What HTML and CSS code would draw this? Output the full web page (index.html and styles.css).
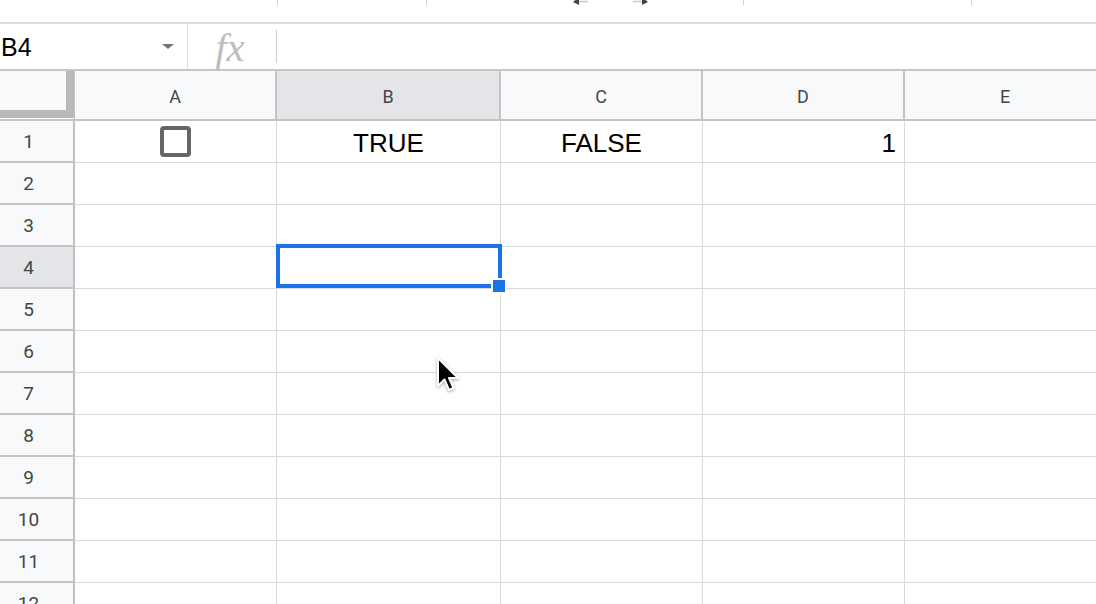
FILE: index.html
```html
<!DOCTYPE html>
<html lang="en">
<head>
    <meta charset="UTF-8">
    <title>Sheet</title>
    <link rel="stylesheet" href="styles.css">
</head>
<body>
    <!-- Toolbar (cut off at the top) -->
    <div class="toolbar">
        <span class="tb-sep sep-1"></span>
        <span class="tb-sep sep-2"></span>
        <svg class="tb-arrow arrow-left" width="16" height="6" viewBox="0 0 16 6">
            <path d="M0 2 L6 -3 L6 5 Z" fill="#444746"/>
            <path d="M6 1.5 H15" stroke="#c8c8c8" stroke-width="1.5"/>
        </svg>
        <svg class="tb-arrow arrow-right" width="16" height="6" viewBox="0 0 16 6">
            <path d="M16 2 L10 -3 L10 5 Z" fill="#444746"/>
            <path d="M1 1.5 H10" stroke="#c8c8c8" stroke-width="1.5"/>
        </svg>
        <span class="tb-sep sep-3"></span>
        <span class="tb-sep sep-4"></span>
    </div>

    <!-- Name box + formula bar -->
    <div class="formula-bar">
        <div class="name-box">
            <span class="name">B4</span>
            <span class="caret"></span>
        </div>
        <div class="fx">fx</div>
        <span class="fx-sep"></span>
        <div class="formula-input"></div>
    </div>

    <!-- Grid -->
    <div class="sheet">
        <div class="corner"><div class="freeze"></div></div>
        <div class="hdr">A</div>
        <div class="hdr active">B</div>
        <div class="hdr">C</div>
        <div class="hdr">D</div>
        <div class="hdr">E</div>

        <div class="rh">1</div>
        <div class="cell center"><span class="checkbox"></span></div>
        <div class="cell center text">TRUE</div>
        <div class="cell center text">FALSE</div>
        <div class="cell right text">1</div>
        <div class="cell"></div>

        <div class="rh">2</div>
        <div class="cell"></div><div class="cell"></div><div class="cell"></div><div class="cell"></div><div class="cell"></div>

        <div class="rh">3</div>
        <div class="cell"></div><div class="cell"></div><div class="cell"></div><div class="cell"></div><div class="cell"></div>

        <div class="rh active">4</div>
        <div class="cell"></div>
        <div class="cell selected">
            <div class="selection"><span class="handle"></span></div>
        </div>
        <div class="cell"></div><div class="cell"></div><div class="cell"></div>

        <div class="rh">5</div>
        <div class="cell"></div><div class="cell"></div><div class="cell"></div><div class="cell"></div><div class="cell"></div>

        <div class="rh">6</div>
        <div class="cell"></div><div class="cell"></div><div class="cell"></div><div class="cell"></div><div class="cell"></div>

        <div class="rh">7</div>
        <div class="cell"></div><div class="cell"></div><div class="cell"></div><div class="cell"></div><div class="cell"></div>

        <div class="rh">8</div>
        <div class="cell"></div><div class="cell"></div><div class="cell"></div><div class="cell"></div><div class="cell"></div>

        <div class="rh">9</div>
        <div class="cell"></div><div class="cell"></div><div class="cell"></div><div class="cell"></div><div class="cell"></div>

        <div class="rh">10</div>
        <div class="cell"></div><div class="cell"></div><div class="cell"></div><div class="cell"></div><div class="cell"></div>

        <div class="rh">11</div>
        <div class="cell"></div><div class="cell"></div><div class="cell"></div><div class="cell"></div><div class="cell"></div>

        <div class="rh">12</div>
        <div class="cell"></div><div class="cell"></div><div class="cell"></div><div class="cell"></div><div class="cell"></div>
    </div>

    <!-- Mouse pointer -->
    <svg class="pointer" width="26" height="40" viewBox="0 0 26 40">
        <path d="M2 2 L2 30 L8.5 23.5 L13 34 L17.5 32 L13 22 L22 22 Z"
              fill="#000" stroke="#fff" stroke-width="2" stroke-linejoin="round"/>
    </svg>
</body>
</html>
```

FILE: styles.css
```css
body {
    margin: 0;
    width: 1096px;
    height: 604px;
    overflow: hidden;
    position: relative;
    background: #fff;
    font-family: Arial, "Liberation Sans", sans-serif;
}

/* toolbar */
.toolbar {
    display: flex;
    align-items: flex-start;
    height: 22px;
    border-bottom: 2px solid #dadce0;
}

.tb-sep {
    width: 1px;
    height: 5px;
    background: #d0d0d0;
}

.sep-1 { margin-left: 277px; }
.sep-2 { margin-left: 148px; }
.arrow-left { margin-left: 146px; }
.arrow-right { margin-left: 43px; }
.sep-3 { margin-left: 95px; }
.sep-4 { margin-left: 227px; }

/* formula bar */
.formula-bar {
    display: flex;
    height: 45px;
    border-bottom: 2px solid #c4c7c5;
}

.name-box {
    width: 188px;
    display: flex;
    align-items: center;
    justify-content: space-between;
    padding: 0 13px 0 1px;
    box-sizing: border-box;
    border-right: 1px solid #e0e0e0;
}

.name {
    font-size: 25px;
    color: #000;
    margin-top: 1px;
}

.caret {
    width: 0;
    height: 0;
    border-left: 6px solid transparent;
    border-right: 6px solid transparent;
    border-top: 5px solid #757575;
}

.fx {
    width: 88px;
    display: flex;
    align-items: center;
    justify-content: center;
    font-family: "Liberation Serif", serif;
    font-style: italic;
    font-size: 41px;
    color: #bdbdbd;
    padding-right: 4px;
    box-sizing: border-box;
}

.fx-sep {
    width: 1px;
    height: 33px;
    align-self: center;
    background: #cccccc;
}

.formula-input {
    flex: 1;
}

/* grid */
.sheet {
    display: grid;
    grid-template-columns: 75px 202px 224px 202px 202px 202px;
    grid-template-rows: 50px;
    grid-auto-rows: 42px;
    width: 1107px;
}

.sheet > div {
    box-sizing: border-box;
}

.corner {
    background: #f8f9fa;
    border-right: 1px solid #c0c0c0;
    border-bottom: 2px solid #c4c4c4;
}

.freeze {
    width: 74px;
    height: 47px;
    box-sizing: border-box;
    border-right: 8px solid #b9b9b9;
    border-bottom: 8px solid #b9b9b9;
}

.hdr {
    background: #f8f9fa;
    border-right: 2px solid #c4c4c4;
    border-bottom: 2px solid #c4c4c4;
    display: flex;
    align-items: center;
    justify-content: center;
    font-family: Roboto, "Liberation Sans", sans-serif;
    font-size: 18px;
    color: #444746;
    padding-top: 3px;
}

.rh {
    background: #f8f9fa;
    border-right: 2px solid #c0c0c0;
    border-bottom: 2px solid #c4c4c4;
    display: flex;
    align-items: center;
    justify-content: center;
    padding-right: 16px;
    padding-top: 1px;
    font-family: Roboto, "Liberation Sans", sans-serif;
    font-size: 19px;
    color: #444746;
}

.hdr.active,
.rh.active {
    background: #e3e5e8;
}

.cell {
    border-right: 1px solid #d9d9d9;
    border-bottom: 1px solid #d9d9d9;
    display: flex;
    align-items: center;
    font-size: 26px;
    color: #000;
}

.cell.text {
    padding-top: 3px;
}

.cell.center {
    justify-content: center;
}

.cell.right {
    justify-content: flex-end;
    padding-right: 8px;
}

.checkbox {
    width: 31px;
    height: 31px;
    box-sizing: border-box;
    border: 4px solid #666;
    border-radius: 4px;
}

.cell.selected {
    position: relative;
}

.selection {
    position: absolute;
    left: -1px;
    top: -3px;
    width: 226px;
    height: 44px;
    box-sizing: border-box;
    border: 4px solid #1a73e8;
}

.handle {
    position: absolute;
    left: 211px;
    top: 30px;
    width: 12px;
    height: 12px;
    background: #1a73e8;
    border: 2px solid #fff;
}

.pointer {
    position: absolute;
    left: 436px;
    top: 356px;
    filter: drop-shadow(0 1px 1.5px rgba(0, 0, 0, 0.35));
}
```
